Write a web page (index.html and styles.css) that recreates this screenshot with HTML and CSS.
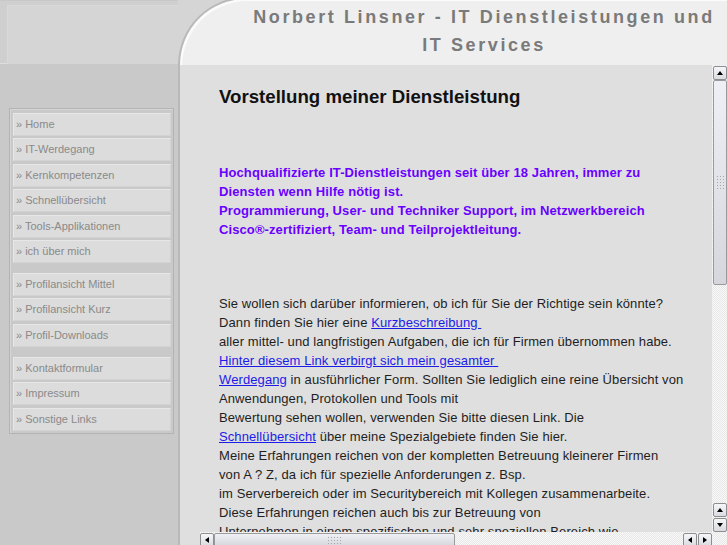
FILE: index.html
```html
<!DOCTYPE html>
<html lang="de">
<head>
    <meta charset="UTF-8">
    <title>Norbert Linsner - IT Dienstleistungen und IT Services</title>
    <link rel="stylesheet" href="styles.css">
</head>
<body>
<div class="page">
    <aside class="side">
        <div class="side-top"><div class="side-top-inner"></div></div>

        <nav class="menu">
            <ul class="menu-group">
                <li><a href="#">» Home</a></li>
                <li><a href="#">» IT-Werdegang</a></li>
                <li><a href="#">» Kernkompetenzen</a></li>
                <li><a href="#">» Schnellübersicht</a></li>
                <li><a href="#">» Tools-Applikationen</a></li>
                <li><a href="#">» ich über mich</a></li>
            </ul>
            <ul class="menu-group">
                <li><a href="#">» Profilansicht Mittel</a></li>
                <li><a href="#">» Profilansicht Kurz</a></li>
                <li><a href="#">» Profil-Downloads</a></li>
            </ul>
            <ul class="menu-group">
                <li><a href="#">» Kontaktformular</a></li>
                <li><a href="#">» Impressum</a></li>
                <li><a href="#">» Sonstige Links</a></li>
            </ul>
        </nav>
    </aside>

    <main class="panel">
        <header class="panel-head">
            <h1 class="site-title">Norbert Linsner - IT Dienstleistungen und<br>IT Services</h1>
        </header>

        <div class="panel-body">
            <div class="frame">
                <div class="frame-view">
                    <h2>Vorstellung meiner Dienstleistung</h2>

                    <p class="intro">
                        Hochqualifizierte IT-Dienstleistungen seit über 18 Jahren, immer zu<br>
                        Diensten wenn Hilfe nötig ist.<br>
                        Programmierung, User- und Techniker Support, im Netzwerkbereich<br>
                        Cisco®-zertifiziert, Team- und Teilprojektleitung.
                    </p>

                    <p class="text">
                        Sie wollen sich darüber informieren, ob ich für Sie der Richtige sein könnte?<br>
                        Dann finden Sie hier eine <a href="#">Kurzbeschreibung&nbsp;</a><br>
                        aller mittel- und langfristigen Aufgaben, die ich für Firmen übernommen habe.<br>
                        <a href="#">Hinter diesem Link verbirgt sich mein gesamter&nbsp;</a><br>
                        <a href="#">Werdegang</a> in ausführlicher Form. Sollten Sie lediglich eine reine Übersicht von<br>
                        Anwendungen, Protokollen und Tools mit<br>
                        Bewertung sehen wollen, verwenden Sie bitte diesen Link. Die<br>
                        <a href="#">Schnellübersicht</a> über meine Spezialgebiete finden Sie hier.<br>
                        Meine Erfahrungen reichen von der kompletten Betreuung kleinerer Firmen<br>
                        von A ? Z, da ich für spezielle Anforderungen z. Bsp.<br>
                        im Serverbereich oder im Securitybereich mit Kollegen zusammenarbeite.<br>
                        Diese Erfahrungen reichen auch bis zur Betreuung von<br>
                        Unternehmen in einem spezifischen und sehr speziellen Bereich wie
                    </p>
                </div>

                <div class="vscroll">
                    <span class="sb-btn up"></span>
                    <span class="sb-thumb"><span class="grip"></span></span>
                    <span class="sb-track"></span>
                    <span class="sb-btn up"></span>
                    <span class="sb-btn down"></span>
                </div>

                <div class="hscroll">
                    <span class="sb-btn left"></span>
                    <span class="sb-thumb"><span class="grip"></span></span>
                    <span class="sb-track"></span>
                    <span class="sb-btn left"></span>
                    <span class="sb-btn right"></span>
                </div>

                <div class="sb-corner"></div>
            </div>
        </div>
    </main>
</div>
</body>
</html>
```

FILE: styles.css
```css
body {
    margin: 0;
    font-family: "Liberation Sans", Arial, sans-serif;
    background: linear-gradient(#d5d5d5 0 62px, #dedede 62px 64px, #c9c9c9 64px);
    overflow: hidden;
}

.page {
    display: grid;
    grid-template-columns: 178px 1fr;
    height: 545px;
}

/* linke Spalte */

.side-top {
    height: 58px;
    padding: 4px 0 0 7px;
    border-top: 1px solid #c9c9c9;
    background-color: #cfcfcf;
}

.side-top-inner {
    height: 100%;
    background-color: #d5d5d5;
    border-top: 1px solid #d9d9d9;
    border-left: 1px solid #d9d9d9;
}

.menu {
    margin: 45px 4px 0 9px;
    padding: 4px 2px 2px 3px;
    background-color: #c9c9c9;
    border: 1px solid #b3b3b3;
    box-shadow: inset 1px 1px 0 #d6d6d6;
    display: flex;
    flex-direction: column;
    gap: 10px;
}

.menu-group {
    list-style: none;
    margin: 0;
    padding: 0;
    display: flex;
    flex-direction: column;
    gap: 2.4px;
}

.menu-group a {
    display: block;
    height: 21px;
    line-height: 21px;
    padding-left: 2px;
    font-size: 11px;
    color: #8a8a8a;
    text-decoration: none;
    background-color: #dcdcdc;
    border: 1px solid;
    border-color: #e7e7e7 #d3d3d3 #d3d3d3 #e7e7e7;
}

/* Inhaltsbereich */

.panel {
    margin-top: -3px;
    height: 548px;
    display: flex;
    flex-direction: column;
    background-color: #efefef;
    border-top: 2px solid #b9b9b9;
    border-left: 2px solid #b9b9b9;
    border-top-left-radius: 68px;
    box-shadow: inset 2px 2px 0 #fbfbfb;
    overflow: hidden;
}

.panel-head {
    height: 66px;
    padding-left: 61px;
    flex-shrink: 0;
}

.site-title {
    margin: 0;
    padding-top: 3.5px;
    font-size: 18px;
    line-height: 28px;
    letter-spacing: 2.6px;
    text-align: center;
    color: #7a7a7a;
}

.panel-body {
    flex: 1;
    display: flex;
    padding-left: 20px;
    background-color: #dfdfdf;
    min-height: 0;
}

.frame {
    flex: 1;
    display: grid;
    grid-template-columns: 1fr 15px;
    grid-template-rows: 1fr 15px;
    min-height: 0;
}

.frame-view {
    overflow: hidden;
    padding: 20px 0 0 19px;
    white-space: nowrap;
    letter-spacing: 0.1px;
    color: #1e1e1e;
}

.frame-view h2 {
    margin: 0;
    font-size: 18.67px;
    line-height: 24px;
    letter-spacing: 0;
    color: #111;
}

.intro {
    margin: 54px 0 0;
    font-size: 13px;
    font-weight: bold;
    line-height: 19px;
    color: #6a00ff;
}

.text {
    margin: 55px 0 0;
    font-size: 13px;
    line-height: 19px;
}

.text a {
    color: #1c1ce8;
}

/* Rollbalken */

.vscroll,
.hscroll {
    display: flex;
    background: repeating-conic-gradient(#e8e8e8 0 25%, #f8f8f8 0 50%) 0 0 / 2px 2px;
}

.vscroll {
    flex-direction: column;
}

.sb-btn {
    position: relative;
    flex: 0 0 14px;
    box-sizing: border-box;
    height: 14px;
    width: 14px;
    border: 1px solid #8e8e8e;
    border-radius: 2px;
    background: linear-gradient(#f6f7fa, #d9dbe1);
}

.vscroll .sb-btn {
    margin-left: 1px;
}

.vscroll .sb-btn + .sb-btn {
    margin-top: 1px;
}

.vscroll .sb-btn:first-child {
    margin-top: 1px;
}

.hscroll .sb-btn {
    margin-top: 1px;
}

.hscroll .sb-btn.right {
    margin-left: 1px;
}

.sb-btn::before {
    content: "";
    position: absolute;
    left: 50%;
    top: 50%;
    width: 0;
    height: 0;
    border: 3.5px solid transparent;
    transform: translate(-50%, -50%);
}

.sb-btn.up::before {
    border-top: 0;
    border-bottom: 4px solid #000;
}

.sb-btn.down::before {
    border-bottom: 0;
    border-top: 4px solid #000;
}

.sb-btn.left::before {
    border-left: 0;
    border-right: 4px solid #000;
}

.sb-btn.right::before {
    border-right: 0;
    border-left: 4px solid #000;
}

.sb-thumb {
    box-sizing: border-box;
    display: flex;
    align-items: center;
    justify-content: center;
    border: 1px solid #9a9a9a;
    border-radius: 2px;
    background: linear-gradient(#eef0f5, #d5d7dd);
}

.vscroll .sb-thumb {
    flex: 0 0 205px;
    margin-left: 1px;
}

.hscroll .sb-thumb {
    flex: 0 0 241px;
    margin-top: 1px;
}

.sb-track {
    flex: 1;
}

.grip {
    background: radial-gradient(circle, #a6a6a6 0.7px, transparent 1px) 0 0 / 3px 3px;
}

.vscroll .grip {
    width: 9px;
    height: 15px;
}

.hscroll .grip {
    width: 15px;
    height: 9px;
}

.sb-corner {
    background: repeating-conic-gradient(#e8e8e8 0 25%, #f8f8f8 0 50%) 0 0 / 2px 2px;
}
```
